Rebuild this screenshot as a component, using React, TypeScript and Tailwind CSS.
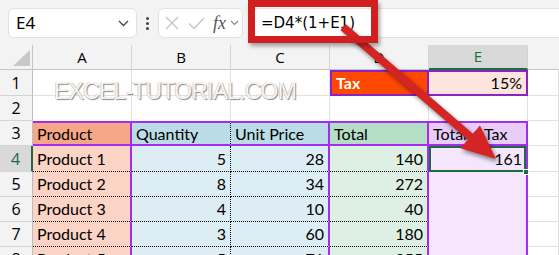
import type { ReactNode } from 'react';

const rows: [string, number, number, number, number | ''][] = [
  ['Product 1', 5, 28, 140, 161],
  ['Product 2', 8, 34, 272, ''],
  ['Product 3', 4, 10, 40, ''],
  ['Product 4', 3, 60, 180, ''],
  ['Product 5', 5, 71, 355, ''],
];

function Cell({ c = '', children }: { c?: string; children?: ReactNode }) {
  return (
    <div
      className={
        'relative flex items-center overflow-hidden whitespace-nowrap px-[4px] text-[16px] text-black font-["Lato",sans-serif] ' +
        c
      }
    >
      {children}
    </div>
  );
}

function RowHead({ n, active = false }: { n: number; active?: boolean }) {
  return (
    <div
      className={
        'flex items-center justify-center border-b border-[#d4d4d4] text-[16px] font-["Open_Sans",sans-serif] ' +
        (active
          ? 'bg-[#d9d9d9] text-[#1e6b40] border-r-2 border-r-[#1e6b40]'
          : 'bg-[#f3f3f3] text-black border-r border-r-[#bdbdbd]')
      }
    >
      {n}
    </div>
  );
}

function ColHead({ l, active = false }: { l: string; active?: boolean }) {
  return (
    <div
      className={
        'flex items-center justify-center border-r border-[#d4d4d4] text-[15px] font-["Open_Sans",sans-serif] ' +
        (active
          ? 'bg-[#d9d9d9] text-[#1e6b40] border-b-2 border-b-[#1e6b40]'
          : 'bg-[#f3f3f3] text-black border-b border-b-[#c4c4c4]')
      }
    >
      {l}
    </div>
  );
}

const grid = 'border-r border-b border-[#e1e1e1]';

export default function App() {
  return (
    <div className="relative h-[255px] w-[559px] overflow-hidden bg-white">
      {/* Formula bar */}
      <div className="flex h-[45px] items-start bg-[#f3f3f3] pl-[8px] pt-[8px]">
        <div className="flex h-[30px] w-[129px] items-center justify-between rounded-md border border-[#e2e2e2] bg-white pl-[7px] pr-[7px]">
          <span className='text-[17px] text-black font-["Noto_Sans",sans-serif]'>E4</span>
          <svg width="11" height="7" viewBox="0 0 11 7" fill="none" stroke="#444" strokeWidth="1.3">
            <polyline points="1,1 5.5,5.5 10,1" />
          </svg>
        </div>
        <div className="flex h-[30px] w-[21px] flex-col items-center justify-center gap-[2px]">
          <span className="h-[3px] w-[3px] rounded-full bg-[#444]" />
          <span className="h-[3px] w-[3px] rounded-full bg-[#444]" />
          <span className="h-[3px] w-[3px] rounded-full bg-[#444]" />
        </div>
        <div className="flex h-[30px] w-[85px] items-center rounded-md border border-[#e2e2e2] bg-white pl-[6px]">
          <svg width="14" height="14" viewBox="0 0 14 14" stroke="#c4c4c4" strokeWidth="1.3">
            <line x1="1" y1="1" x2="13" y2="13" />
            <line x1="13" y1="1" x2="1" y2="13" />
          </svg>
          <svg className="ml-[9px]" width="17" height="13" viewBox="0 0 17 13" fill="none" stroke="#c4c4c4" strokeWidth="1.3">
            <polyline points="1,6.5 6,11.5 16,1" />
          </svg>
          <span className='ml-[8px] text-[18px] italic leading-none text-[#555] font-["Liberation_Serif",serif]'>fx</span>
          <svg className="ml-[4px]" width="9" height="6" viewBox="0 0 9 6" fill="none" stroke="#888" strokeWidth="1.2">
            <polyline points="1,1 4.5,4.5 8,1" />
          </svg>
        </div>
        <div className="ml-[5px] flex h-[30px] flex-1 items-center rounded-l-md border border-r-0 border-[#e2e2e2] bg-white pl-[12px]">
          <span className='text-[15px] text-black font-["DejaVu_Sans",sans-serif]'>=D4*(1+E1)</span>
        </div>
      </div>

      {/* Sheet */}
      <div className="grid h-[210px] grid-cols-[33px_99px_99px_99px_99px_99px_1fr] grid-rows-[25px_26px_25px_25px_26px_25px_25px_25px_25px] overflow-hidden">
        <div className="flex items-end justify-end border-r border-b border-[#c4c4c4] bg-[#f3f3f3] pb-[3px] pr-[2px]">
          <svg width="17" height="16" viewBox="0 0 17 16">
            <polygon points="17,0 17,16 0,16" fill="#c8c8c8" />
          </svg>
        </div>
        <ColHead l="A" />
        <ColHead l="B" />
        <ColHead l="C" />
        <ColHead l="D" />
        <ColHead l="E" active />
        <div className="border-b border-[#c4c4c4] bg-[#f3f3f3]" />

        {/* Row 1 */}
        <RowHead n={1} />
        <Cell c={grid} />
        <Cell c={grid} />
        <Cell c={grid} />
        <Cell c="bg-[#ff4800] border-2 border-[#8a22c4] font-bold text-white">
          <span className="text-white">Tax</span>
        </Cell>
        <Cell c="justify-end bg-[#fde4dc] border-y-2 border-r-2 border-[#8a22c4]">15%</Cell>
        <Cell c={grid} />

        {/* Row 2 */}
        <RowHead n={2} />
        <Cell c="border-r border-[#e1e1e1]" />
        <Cell c="border-r border-[#e1e1e1]" />
        <Cell c="border-r border-[#e1e1e1]" />
        <Cell c="border-r border-[#e1e1e1]" />
        <Cell c="border-r border-[#e1e1e1]" />
        <Cell c={grid} />

        {/* Row 3 */}
        <RowHead n={3} />
        <Cell c="bg-[#f6a886] border-y-2 border-r-2 border-[#a32cf0]">Product</Cell>
        <Cell c="bg-[#badce6] border-y-2 border-[#a32cf0] border-r border-r-black [border-right-style:dotted]">Quantity</Cell>
        <Cell c="bg-[#badce6] border-y-2 border-r-2 border-[#a32cf0]">Unit Price</Cell>
        <Cell c="bg-[#b4dfc5] border-y-2 border-r-2 border-[#a32cf0]">Total</Cell>
        <Cell c="bg-[#e8cdf8] border-y-2 border-r-2 border-[#a32cf0]">Total + Tax</Cell>
        <Cell c={grid} />

        {rows.map((r, i) => (
          <Row key={r[0]} r={r} n={i + 4} />
        ))}
      </div>

      {/* Watermark */}
      <div className='pointer-events-none absolute left-[54px] top-[80px] text-[23px] leading-none tracking-[-0.8px] text-[#f5f5f5] font-["Liberation_Sans",sans-serif] [text-shadow:1px_1px_1px_#8a8a8a,-0.5px_-0.5px_0_#c4c4c4]'>
        EXCEL-TUTORIAL.COM
      </div>

      {/* Arrow */}
      <svg className="pointer-events-none absolute left-0 top-0 drop-shadow-[2px_3px_2px_rgba(0,0,0,0.45)]" width="559" height="255" viewBox="0 0 559 255">
        <line x1="343" y1="27" x2="473" y2="139" stroke="#d42424" strokeWidth="8" />
        <polygon points="496,159 460.4,148.2 480,125.4" fill="#d42424" />
      </svg>

      {/* Highlight box */}
      <div className="pointer-events-none absolute left-[248px] top-0 h-[43px] w-[130px] border-[7px] border-[#d11f1f] shadow-[2px_3px_4px_rgba(0,0,0,0.35)]" />
    </div>
  );
}

function Row({ r, n }: { r: [string, number, number, number, number | '']; n: number }) {
  const active = n === 4;
  return (
    <>
      <RowHead n={n} active={active} />
      <Cell c="bg-[#fbd4c5] border-r-2 border-r-[#a32cf0] border-b border-b-black [border-bottom-style:dotted]">{r[0]}</Cell>
      <Cell c="justify-end bg-[#ddedf4] border-r border-b border-black border-dotted">{r[1]}</Cell>
      <Cell c="justify-end bg-[#ddedf4] border-r-2 border-r-[#a32cf0] border-b border-b-black [border-bottom-style:dotted]">{r[2]}</Cell>
      <Cell c="justify-end bg-[#ddf0e3] border-r-2 border-r-[#a32cf0] border-b border-b-black [border-bottom-style:dotted]">{r[3]}</Cell>
      <Cell c="justify-end overflow-visible bg-[#f5e6fd] border-r-2 border-r-[#a32cf0]">
        {r[4]}
        {active && (
          <>
            <span className="absolute inset-0 border-2 border-[#1e6b40]" />
            <span className="absolute -bottom-[3px] -right-[3px] z-10 h-[6px] w-[6px] border border-white bg-[#1e6b40]" />
          </>
        )}
      </Cell>
      <Cell c={grid} />
    </>
  );
}
